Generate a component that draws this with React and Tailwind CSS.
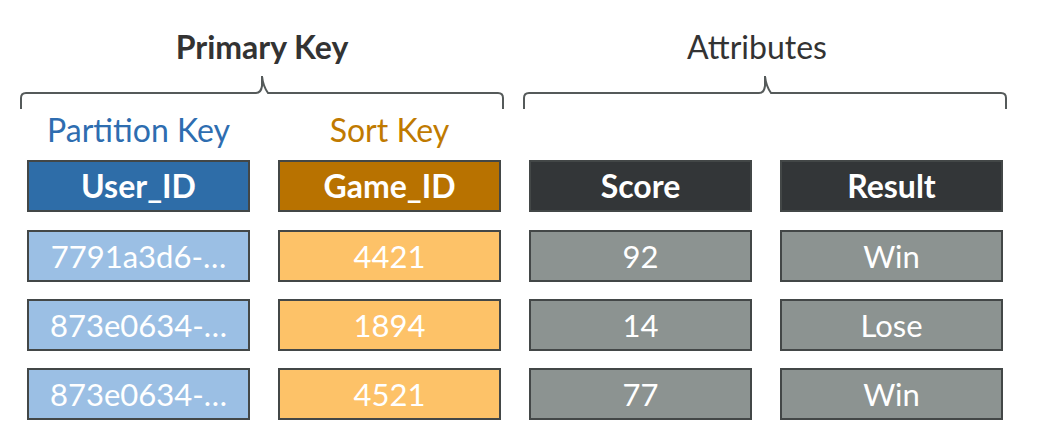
const rows = [
  ['7791a3d6-…', '4421', '92', 'Win'],
  ['873e0634-…', '1894', '14', 'Lose'],
  ['873e0634-…', '4521', '77', 'Win'],
];

const headers = [
  { label: 'User_ID', cls: 'bg-[#2e6da8]' },
  { label: 'Game_ID', cls: 'bg-[#b87200]' },
  { label: 'Score', cls: 'bg-[#333638]' },
  { label: 'Result', cls: 'bg-[#333638]' },
];

const cellColors = ['bg-[#9bbfe4]', 'bg-[#fdc268]', 'bg-[#8c9391]', 'bg-[#8c9391]'];

function Brace() {
  // curly brace opening downwards, tip in the middle
  return (
    <svg width="484" height="35" viewBox="0 0 484 35" fill="none">
      <path
        d="M1 34 V23 Q1 18 6 18 H236 Q241 18 242 11 V1 Q243 11 248 18 H478 Q483 18 483 23 V34"
        stroke="#555a5a"
        strokeWidth="2"
      />
    </svg>
  );
}

function Cell({ children, cls, bold }) {
  return (
    <div
      className={`w-[223px] h-[52px] flex items-center justify-center border-2 border-[#434747] text-white leading-[36px] ${cls} ${
        bold ? 'font-bold text-[32px]' : 'text-[31px]'
      }`}
    >
      {children}
    </div>
  );
}

export default function App() {
  return (
    <div className="w-[1042px] h-[448px] bg-white overflow-hidden font-['Lato','Open_Sans',sans-serif]">
      <div className="pt-[29px] pl-[20px] flex gap-[19px]">
        <div className="w-[484px] flex flex-col items-center">
          <div className="h-[36px] leading-[36px] text-[32px] font-bold text-[#333333]">Primary Key</div>
          <div className="mt-[10px]">
            <Brace />
          </div>
        </div>
        <div className="w-[484px] flex flex-col items-center">
          <div className="h-[36px] leading-[36px] text-[32px] text-[#333333] pr-[16px]">Attributes</div>
          <div className="mt-[10px]">
            <Brace />
          </div>
        </div>
      </div>

      <div className="pl-[27px] mt-[2px] flex gap-[28px] h-[36px] leading-[36px] text-[32px]">
        <div className="w-[223px] text-center text-[#2e6db0]">Partition Key</div>
        <div className="w-[223px] text-center text-[#c07a00]">Sort Key</div>
      </div>

      <div className="pl-[27px] mt-[12px] flex gap-[28px]">
        {headers.map((h) => (
          <Cell key={h.label} cls={h.cls} bold>
            {h.label}
          </Cell>
        ))}
      </div>

      <div className="pl-[27px] mt-[18px] flex flex-col gap-[17px]">
        {rows.map((r, i) => (
          <div key={i} className="flex gap-[28px]">
            {r.map((v, j) => (
              <Cell key={j} cls={cellColors[j]}>
                {v}
              </Cell>
            ))}
          </div>
        ))}
      </div>
    </div>
  );
}
